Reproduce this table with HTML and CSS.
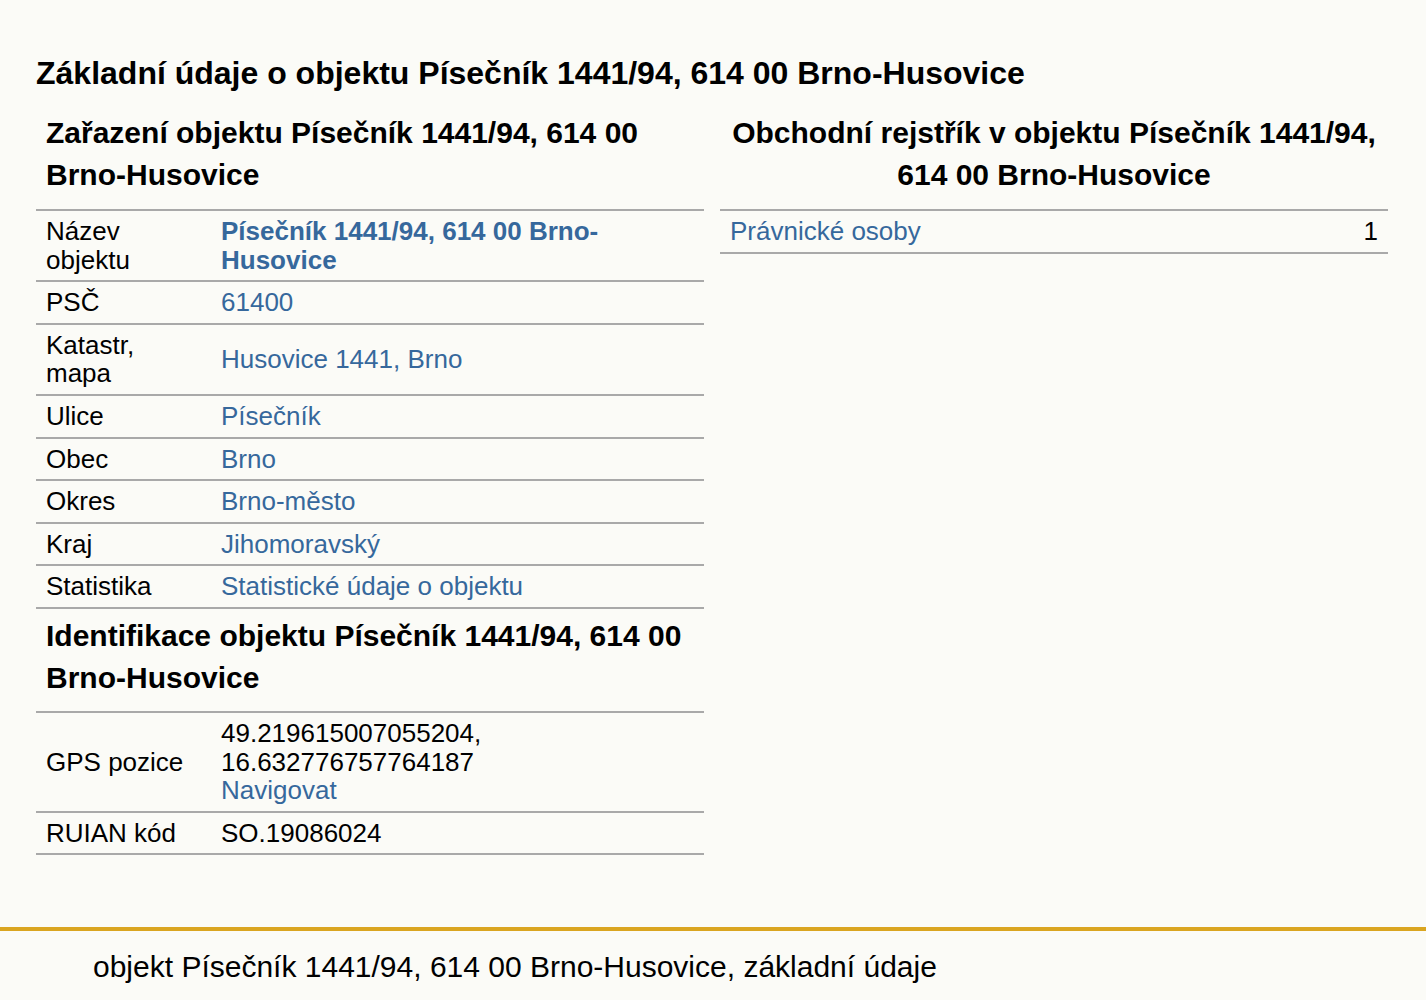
FILE: index.html
```html
<!DOCTYPE html>
<html lang="cs">
<head>
    <meta charset="UTF-8">
    <meta name="viewport" content="width=device-width, initial-scale=1.0">
    <title>Písečník 1441/94, 614 00 Brno-Husovice</title>
    <link rel="stylesheet" href="styles.css">
</head>
<body>
    <div class="content">
        <h1>Základní údaje o objektu Písečník 1441/94, 614 00 Brno-Husovice</h1>
        <div class="columns">
            <div class="column">
                <h2>Zařazení objektu Písečník 1441/94, 614 00 Brno-Husovice</h2>
                <table class="info">
                    <colgroup>
                        <col class="label-col">
                        <col>
                    </colgroup>
                    <tr>
                        <td>Název objektu</td>
                        <td><a href="#" class="strong">Písečník 1441/94, 614 00 Brno-Husovice</a></td>
                    </tr>
                    <tr>
                        <td>PSČ</td>
                        <td><a href="#">61400</a></td>
                    </tr>
                    <tr>
                        <td>Katastr, mapa</td>
                        <td><a href="#">Husovice 1441, Brno</a></td>
                    </tr>
                    <tr>
                        <td>Ulice</td>
                        <td><a href="#">Písečník</a></td>
                    </tr>
                    <tr>
                        <td>Obec</td>
                        <td><a href="#">Brno</a></td>
                    </tr>
                    <tr>
                        <td>Okres</td>
                        <td><a href="#">Brno-město</a></td>
                    </tr>
                    <tr>
                        <td>Kraj</td>
                        <td><a href="#">Jihomoravský</a></td>
                    </tr>
                    <tr>
                        <td>Statistika</td>
                        <td><a href="#">Statistické údaje o objektu</a></td>
                    </tr>
                </table>
                <h2 class="sub">Identifikace objektu Písečník 1441/94, 614 00 Brno-Husovice</h2>
                <table class="info">
                    <colgroup>
                        <col class="label-col">
                        <col>
                    </colgroup>
                    <tr>
                        <td>GPS pozice</td>
                        <td>49.219615007055204,<br>16.632776757764187<br><a href="#">Navigovat</a></td>
                    </tr>
                    <tr>
                        <td>RUIAN kód</td>
                        <td>SO.19086024</td>
                    </tr>
                </table>
            </div>
            <div class="column">
                <h2 class="centered">Obchodní rejstřík v objektu Písečník 1441/94, 614 00 Brno-Husovice</h2>
                <table class="info">
                    <tr>
                        <td><a href="#">Právnické osoby</a></td>
                        <td class="count">1</td>
                    </tr>
                </table>
            </div>
        </div>
    </div>

    <div class="footer">
        <p>objekt Písečník 1441/94, 614 00 Brno-Husovice, základní údaje</p>
    </div>
</body>
</html>
```

FILE: styles.css
```css
body {
    font-family: "Liberation Sans", Arial, sans-serif;
    margin: 0;
    padding: 0;
    background: #fbfbf7;
    color: #000;
}

a {
    color: #36689c;
    text-decoration: none;
}

a.strong {
    font-weight: bold;
}

.content {
    padding: 55px 38px 72px 36px;
}

h1 {
    margin: 0 0 21px 0;
    font-size: 32px;
    line-height: 36px;
}

.columns {
    display: flex;
    gap: 16px;
}

.column {
    flex: 1;
    min-width: 0;
}

h2 {
    margin: 0;
    padding: 0 10px 13px 10px;
    font-size: 30px;
    line-height: 42px;
}

h2.sub {
    padding-top: 6px;
    padding-bottom: 12px;
}

h2.centered {
    text-align: center;
}

.info {
    width: 100%;
    table-layout: fixed;
    border-collapse: collapse;
    font-size: 26px;
    line-height: 28.6px;
    border-top: 2px solid #a9a9a9;
}

.label-col {
    width: 175px;
}

.info td {
    padding: 6px 10px;
    border-bottom: 2px solid #a9a9a9;
    vertical-align: middle;
}

.info td.count {
    text-align: right;
}

.footer {
    border-top: 4px solid #daa520;
}

.footer p {
    margin: 0;
    padding: 19px 0 19px 93px;
    font-size: 30px;
}
```
